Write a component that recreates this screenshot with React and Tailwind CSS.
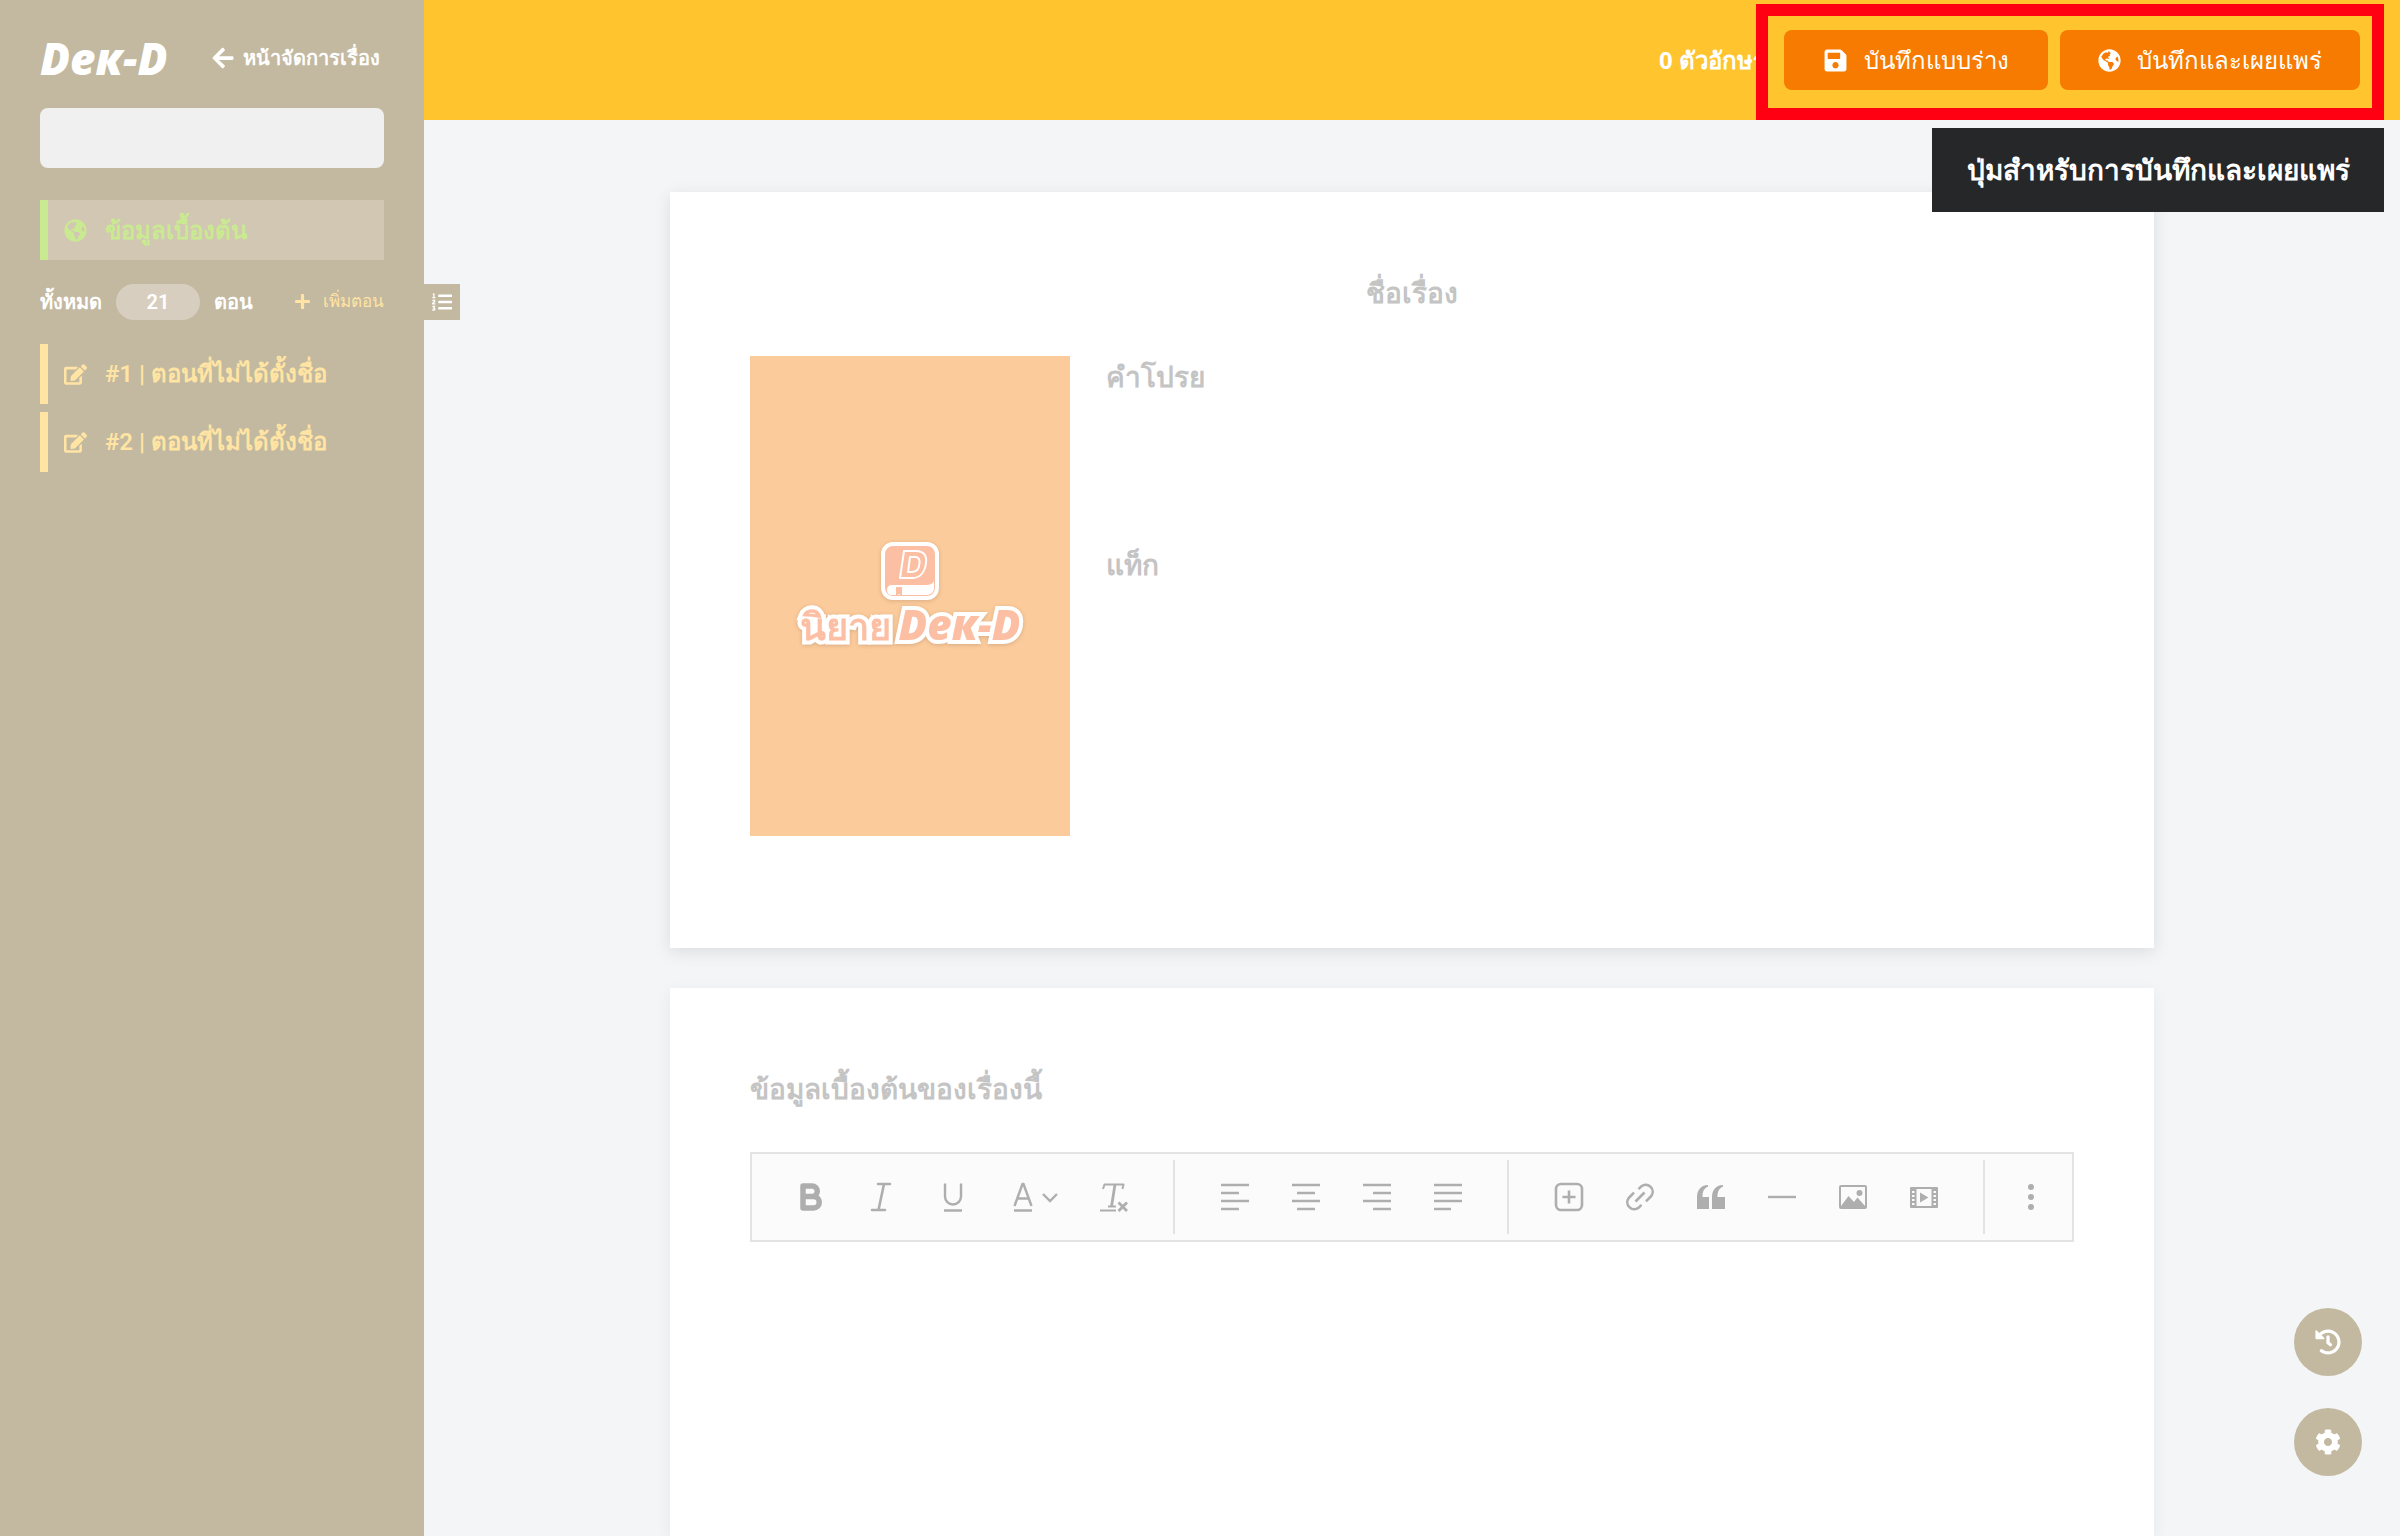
import { FaArrowLeft, FaCog, FaEdit, FaGlobeAmericas, FaHistory, FaListOl, FaPlus, FaSave } from 'react-icons/fa';

const chapters = [
  { id: 1, title: 'ตอนที่ไม่ได้ตั้งชื่อ' },
  { id: 2, title: 'ตอนที่ไม่ได้ตั้งชื่อ' },
];

const Icon = ({ children }) => (
  <svg viewBox="0 0 32 32" className="size-8 shrink-0" fill="none" stroke="currentColor" strokeWidth="2" strokeLinecap="round" strokeLinejoin="round">
    {children}
  </svg>
);

const Lines = ({ d }) => (
  <Icon>
    <path strokeWidth="2.4" strokeLinecap="butt" d={d} />
  </Icon>
);

const Bold = () => (
  <Icon>
    <path strokeWidth="5.5" d="M7 5h9a5 5 0 0 1 0 10.5H7zM7 15.5h10.5a5.7 5.7 0 0 1 0 11.5H7z" />
  </Icon>
);

const Italic = () => (
  <Icon>
    <path strokeWidth="2.6" d="M11 3h12M5 29h13M17 3l-5.500 26" />
  </Icon>
);

const Underline = () => (
  <Icon>
    <path strokeWidth="2.4" strokeLinecap="butt" d="M7 2.500v13a8 8 0 0 0 16 0v-13M6 29.500h18" />
  </Icon>
);

const TextColor = () => (
  <span className="flex items-center gap-2 pl-1">
    <svg viewBox="0 0 20 32" className="h-8 w-5" fill="none" stroke="currentColor" strokeWidth="2.4" strokeLinejoin="round">
      <path d="M1.500 25L9.500 3h1l8 22M4.500 17.500h11M1 29.500h18" />
    </svg>
    <svg viewBox="0 0 18 12" className="h-3 w-[18px]" fill="none" stroke="currentColor" strokeWidth="2.4">
      <path d="M2 3l7 7 7-7" />
    </svg>
  </span>
);

const ClearFormat = () => (
  <Icon>
    <path strokeLinecap="butt" d="M5 8l1.500-4.500h19L24.500 8M2 29.500h16M10 25.500h8" />
    <path strokeWidth="2.800" strokeLinecap="butt" d="M17 3.500l-3.500 22" />
    <path strokeWidth="2.800" strokeLinecap="butt" d="M20.500 21.500l8.500 8.500M29 21.500l-8.500 8.500" />
  </Icon>
);

const Insert = () => (
  <Icon>
    <rect x="3" y="3" width="26" height="26" rx="5" strokeWidth="2.6" />
    <path strokeWidth="2.6" strokeLinecap="butt" d="M16 9.500v13M9.500 16h13" />
  </Icon>
);

const LinkIcon = () => (
  <Icon>
    <g strokeWidth="2.6" strokeLinecap="butt">
      <path d="M14.500 8.200l3-3a7 7 0 0 1 9.800 9.800l-5.300 5.300" />
      <path d="M17.500 23.800l-3 3a7 7 0 0 1-9.800-9.800l5.300-5.300" />
      <path d="M11.500 20.500l9-9" />
    </g>
  </Icon>
);

const Quote = () => (
  <Icon>
    <path fill="currentColor" stroke="none" d="M2 28V16.500C2 9 5.500 4.500 13 4v1.800C9 7.200 7.500 10.500 7.500 16H14v12zM17 28V16.500C17 9 20.500 4.500 28 4v1.800C24 7.200 22.500 10.500 22.500 16H30v12z" />
  </Icon>
);

const Picture = () => (
  <Icon>
    <rect x="3" y="5" width="26" height="22" rx="1" />
    <circle cx="22.500" cy="12" r="3" fill="currentColor" stroke="none" />
    <path fill="currentColor" stroke="none" d="M4 25l7.500-10 5.500 6 3.500-4.500L28 25v2H4z" />
  </Icon>
);

const Video = () => (
  <Icon>
    <rect x="3" y="7" width="26" height="19" />
    <path d="M7.500 7v19M24.500 7v19" />
    <path strokeWidth="4" strokeLinecap="butt" strokeDasharray="2 2" d="M5 8v17M27 8v17" />
    <path fill="currentColor" stroke="none" d="M12 11.500l8.500 5-8.500 5z" />
  </Icon>
);

const More = () => (
  <svg viewBox="0 0 32 32" className="size-8" fill="currentColor">
    <circle cx="16" cy="6" r="3" />
    <circle cx="16" cy="16" r="3" />
    <circle cx="16" cy="26" r="3" />
  </svg>
);

const toolGroups = [
  [
    { name: 'Bold', icon: <Bold /> },
    { name: 'Italic', icon: <Italic /> },
    { name: 'Underline', icon: <Underline /> },
    { name: 'Text color', icon: <TextColor />, wide: true },
    { name: 'Clear formatting', icon: <ClearFormat /> },
  ],
  [
    { name: 'Align left', icon: <Lines d="M2 4h28M2 12h18M2 20h28M2 28h18" /> },
    { name: 'Align center', icon: <Lines d="M2 4h28M7 12h18M2 20h28M7 28h18" /> },
    { name: 'Align right', icon: <Lines d="M2 4h28M12 12h18M2 20h28M12 28h18" /> },
    { name: 'Justify', icon: <Lines d="M2 4h28M2 12h28M2 20h28M2 28h17" /> },
  ],
  [
    { name: 'Insert', icon: <Insert /> },
    { name: 'Insert link', icon: <LinkIcon /> },
    { name: 'Quote', icon: <Quote /> },
    { name: 'Horizontal line', icon: <Lines d="M2 16h28" /> },
    { name: 'Insert image', icon: <Picture /> },
    { name: 'Insert video', icon: <Video /> },
  ],
];

const ToolButton = ({ name, icon, wide }) => (
  <button type="button" aria-label={name} className={`${wide ? 'w-[89px]' : 'w-[71px]'} h-full flex items-center justify-center`}>
    {icon}
  </button>
);

const Toolbar = () => (
  <div className="h-[90px] flex items-center border-2 border-[#e3e3e3] bg-[#fbfbfb] text-[#aeaeae]">
    {toolGroups.map((group, i) => (
      <div key={i} className="h-[74px] flex px-6 border-r-2 border-[#e3e3e3]">
        {group.map((tool) => (
          <ToolButton key={tool.name} {...tool} />
        ))}
      </div>
    ))}
    <div className="h-[74px] flex px-2.5">
      <ToolButton name="More" icon={<More />} />
    </div>
  </div>
);

const Cover = () => (
  <div className="w-80 h-[480px] shrink-0 bg-[#fccb9b] text-[#fdbfa3] flex flex-col items-center justify-center">
    <svg viewBox="0 0 58 58" className="size-[58px] drop-shadow-sm" fill="none" stroke="#fff">
      <rect x="2" y="2" width="54" height="54" rx="10" fill="#fdbfa3" strokeWidth="4" />
      <path strokeWidth="2" strokeLinejoin="round" d="M23 9h12c8 0 11 5 10 12-1 9-6 15-14 15H19zM29 15h5c4 0 5 3 4.500 6.500C38 27 35 30 31 30h-4z" />
      <path fill="#fff" stroke="none" d="M11 43h34c4 0 6-1 8-4v8c-1 4-4 6-8 6H11c-3 0-5-2-5-5s2-5 5-5z" />
      <path fill="#fdbfa3" stroke="none" d="M15 45h6v9l-3-2-3 2z" />
    </svg>
    <p className="flex items-baseline gap-2 font-bold leading-[48px] drop-shadow-sm [-webkit-text-stroke:8px_white] [paint-order:stroke_fill]">
      <span className="font-['Roboto',sans-serif] text-[38px]">นิยาย</span>
      <span className="font-['Open_Sans'] text-[42px] font-extrabold italic">Deк-D</span>
    </p>
  </div>
);

const Sidebar = () => (
  <aside className="relative w-[424px] shrink-0 bg-[#c3b9a0] px-10 text-white">
    <div className="h-[108px] flex items-center justify-between pb-8 pt-10">
      <a href="#home" className="font-['Open_Sans'] text-[44px] font-extrabold italic leading-none">Deк-D</a>
      <a href="#manage" className="flex items-center gap-2 pr-1 font-['Roboto',sans-serif] text-xl font-semibold">
        <FaArrowLeft size={24} />
        หน้าจัดการเรื่อง
      </a>
    </div>

    <input aria-label="ชื่อเรื่อง" className="block h-[60px] w-full rounded-lg bg-[#f0f0f0] px-4 text-2xl text-gray-700" />

    <a href="#info" className="mt-8 h-[60px] flex items-center gap-[18px] border-l-8 border-[#c9ea90] bg-[#d1c7b3] pl-4 text-2xl font-semibold text-[#c9ea90]">
      <FaGlobeAmericas size={23} />
      ข้อมูลเบื้องต้น
    </a>

    <div className="mt-6 h-9 flex items-center font-['Roboto',sans-serif] text-xl font-semibold">
      <span>ทั้งหมด</span>
      <span className="mx-3.5 h-9 w-[84px] flex items-center justify-center rounded-full bg-[#d8cebf]">21</span>
      <span>ตอน</span>
      <button type="button" className="ml-auto flex items-center gap-3 text-[17px] font-medium text-[#ffe4a3]">
        <FaPlus size={17} />
        เพิ่มตอน
      </button>
    </div>

    <ul className="mt-6 space-y-2">
      {chapters.map((chapter) => (
        <li key={chapter.id}>
          <a href={`#chapter-${chapter.id}`} className="h-[60px] flex items-center gap-[18px] border-l-8 border-[#ffe4a3] pl-4 font-['Roboto',sans-serif] text-2xl font-semibold text-[#ffe4a3]">
            <FaEdit size={23} />
            #{chapter.id} | {chapter.title}
          </a>
        </li>
      ))}
    </ul>

    <button type="button" aria-label="สารบัญ" className="absolute left-full top-[284px] size-9 flex items-center justify-center bg-[#c3b9a0]">
      <FaListOl size={20} />
    </button>
  </aside>
);

const Header = () => (
  <header className="relative h-[120px] flex items-center justify-end bg-[#ffc42e] pr-10 text-2xl text-white">
    <span className="mr-[18px] font-bold">0 ตัวอักษร</span>
    <button type="button" className="mr-3 h-[60px] w-[264px] flex items-center justify-center gap-4 rounded-lg bg-[#f67b00]">
      <FaSave size={25} />
      บันทึกแบบร่าง
    </button>
    <button type="button" className="h-[60px] w-[300px] flex items-center justify-center gap-4 rounded-lg bg-[#f67b00]">
      <FaGlobeAmericas size={23} />
      บันทึกและเผยแพร่
    </button>

    <div className="pointer-events-none absolute right-4 top-1 h-[116px] w-[628px] border-[12px] border-[#ff0012]" />
    <div role="tooltip" className="absolute right-4 top-32 z-10 h-[84px] w-[452px] flex items-center justify-center bg-[#262728] text-[28px] font-semibold">
      ปุ่มสำหรับการบันทึกและเผยแพร่
    </div>
  </header>
);

export default function App() {
  return (
    <div className="min-h-screen flex bg-[#f3f5f7] font-['Noto_Sans',sans-serif]">
      <Sidebar />

      <div className="flex-1 min-w-0 flex flex-col">
        <Header />

        <main className="flex-1 flex flex-col gap-10 px-10 pt-[72px] text-[28px] font-bold leading-10 text-[#c4c4c4]">
          <section className="mx-auto w-full max-w-[1484px] bg-white px-20 pb-28 pt-20 shadow-[0_4px_16px_rgba(0,0,0,0.1)]">
            <h1 className="text-center">ชื่อเรื่อง</h1>
            <div className="mt-11 flex gap-9">
              <Cover />
              <div className="flex-1">
                <h2 className="h-[188px]">คำโปรย</h2>
                <h2>แท็ก</h2>
              </div>
            </div>
          </section>

          <section className="mx-auto w-full max-w-[1484px] flex-1 bg-white px-20 pt-20 shadow-[0_4px_16px_rgba(0,0,0,0.06)]">
            <h2 className="mb-11">ข้อมูลเบื้องต้นของเรื่องนี้</h2>
            <Toolbar />
          </section>
        </main>
      </div>

      <div className="fixed bottom-[60px] right-[38px] flex flex-col gap-8 text-white">
        <button type="button" aria-label="ประวัติ" className="size-[68px] flex items-center justify-center rounded-full bg-[#c3b9a0]">
          <FaHistory size={26} />
        </button>
        <button type="button" aria-label="ตั้งค่า" className="size-[68px] flex items-center justify-center rounded-full bg-[#c3b9a0]">
          <FaCog size={26} />
        </button>
      </div>
    </div>
  );
}
